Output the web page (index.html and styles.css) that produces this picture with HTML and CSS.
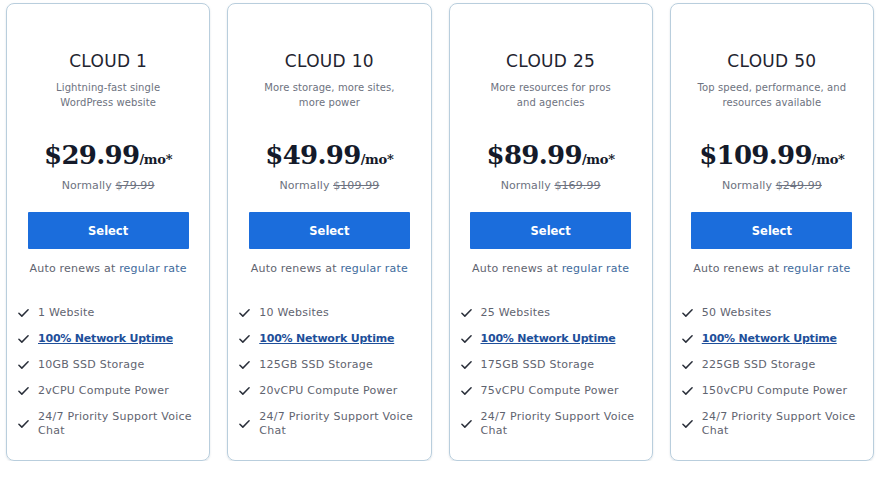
FILE: index.html
```html
<!DOCTYPE html>
<html>
<head>
<meta charset="utf-8">
<link rel="stylesheet" href="styles.css">
</head>
<body>
<div class="plans">
  <div class="card">
    <h2 class="title">CLOUD 1</h2>
    <p class="desc">Lightning-fast single<br>WordPress website</p>
    <div class="price"><span class="amt">$29.99</span><span class="per">/mo*</span></div>
    <p class="normal">Normally <s>$79.99</s></p>
    <button class="btn">Select</button>
    <p class="renew">Auto renews at <span class="link">regular rate</span></p>
    <ul class="feats">
      <li><svg class="chk" viewBox="0 0 12 10"><path d="M1 5.2 L4.2 8.4 L11 1.4"/></svg><span>1 Website</span></li>
      <li><svg class="chk" viewBox="0 0 12 10"><path d="M1 5.2 L4.2 8.4 L11 1.4"/></svg><a class="up">100% Network Uptime</a></li>
      <li><svg class="chk" viewBox="0 0 12 10"><path d="M1 5.2 L4.2 8.4 L11 1.4"/></svg><span>10GB SSD Storage</span></li>
      <li><svg class="chk" viewBox="0 0 12 10"><path d="M1 5.2 L4.2 8.4 L11 1.4"/></svg><span>2vCPU Compute Power</span></li>
      <li><svg class="chk" viewBox="0 0 12 10"><path d="M1 5.2 L4.2 8.4 L11 1.4"/></svg><span>24/7 Priority Support Voice Chat</span></li>
    </ul>
  </div>
  <div class="card">
    <h2 class="title">CLOUD 10</h2>
    <p class="desc">More storage, more sites,<br>more power</p>
    <div class="price"><span class="amt">$49.99</span><span class="per">/mo*</span></div>
    <p class="normal">Normally <s>$109.99</s></p>
    <button class="btn">Select</button>
    <p class="renew">Auto renews at <span class="link">regular rate</span></p>
    <ul class="feats">
      <li><svg class="chk" viewBox="0 0 12 10"><path d="M1 5.2 L4.2 8.4 L11 1.4"/></svg><span>10 Websites</span></li>
      <li><svg class="chk" viewBox="0 0 12 10"><path d="M1 5.2 L4.2 8.4 L11 1.4"/></svg><a class="up">100% Network Uptime</a></li>
      <li><svg class="chk" viewBox="0 0 12 10"><path d="M1 5.2 L4.2 8.4 L11 1.4"/></svg><span>125GB SSD Storage</span></li>
      <li><svg class="chk" viewBox="0 0 12 10"><path d="M1 5.2 L4.2 8.4 L11 1.4"/></svg><span>20vCPU Compute Power</span></li>
      <li><svg class="chk" viewBox="0 0 12 10"><path d="M1 5.2 L4.2 8.4 L11 1.4"/></svg><span>24/7 Priority Support Voice Chat</span></li>
    </ul>
  </div>
  <div class="card">
    <h2 class="title">CLOUD 25</h2>
    <p class="desc">More resources for pros<br>and agencies</p>
    <div class="price"><span class="amt">$89.99</span><span class="per">/mo*</span></div>
    <p class="normal">Normally <s>$169.99</s></p>
    <button class="btn">Select</button>
    <p class="renew">Auto renews at <span class="link">regular rate</span></p>
    <ul class="feats">
      <li><svg class="chk" viewBox="0 0 12 10"><path d="M1 5.2 L4.2 8.4 L11 1.4"/></svg><span>25 Websites</span></li>
      <li><svg class="chk" viewBox="0 0 12 10"><path d="M1 5.2 L4.2 8.4 L11 1.4"/></svg><a class="up">100% Network Uptime</a></li>
      <li><svg class="chk" viewBox="0 0 12 10"><path d="M1 5.2 L4.2 8.4 L11 1.4"/></svg><span>175GB SSD Storage</span></li>
      <li><svg class="chk" viewBox="0 0 12 10"><path d="M1 5.2 L4.2 8.4 L11 1.4"/></svg><span>75vCPU Compute Power</span></li>
      <li><svg class="chk" viewBox="0 0 12 10"><path d="M1 5.2 L4.2 8.4 L11 1.4"/></svg><span>24/7 Priority Support Voice Chat</span></li>
    </ul>
  </div>
  <div class="card">
    <h2 class="title">CLOUD 50</h2>
    <p class="desc">Top speed, performance, and<br>resources available</p>
    <div class="price"><span class="amt">$109.99</span><span class="per">/mo*</span></div>
    <p class="normal">Normally <s>$249.99</s></p>
    <button class="btn">Select</button>
    <p class="renew">Auto renews at <span class="link">regular rate</span></p>
    <ul class="feats">
      <li><svg class="chk" viewBox="0 0 12 10"><path d="M1 5.2 L4.2 8.4 L11 1.4"/></svg><span>50 Websites</span></li>
      <li><svg class="chk" viewBox="0 0 12 10"><path d="M1 5.2 L4.2 8.4 L11 1.4"/></svg><a class="up">100% Network Uptime</a></li>
      <li><svg class="chk" viewBox="0 0 12 10"><path d="M1 5.2 L4.2 8.4 L11 1.4"/></svg><span>225GB SSD Storage</span></li>
      <li><svg class="chk" viewBox="0 0 12 10"><path d="M1 5.2 L4.2 8.4 L11 1.4"/></svg><span>150vCPU Compute Power</span></li>
      <li><svg class="chk" viewBox="0 0 12 10"><path d="M1 5.2 L4.2 8.4 L11 1.4"/></svg><span>24/7 Priority Support Voice Chat</span></li>
    </ul>
  </div>
</div>
</body>
</html>
```
FILE: styles.css
```css
* { box-sizing: border-box; }
html, body { margin: 0; padding: 0; background: #fff; }
body {
  font-family: "DejaVu Sans", "Liberation Sans", sans-serif;
  color: #1f2430;
}
.plans {
  display: grid;
  grid-template-columns: repeat(4, 1fr);
  gap: 17px;
  padding: 3px 6px 0 6px;
}
.card {
  height: 458px;
  border: 1px solid #b9cedd;
  border-radius: 8px;
  box-shadow: 0 1px 2px rgba(120,140,160,0.25);
  display: flex;
  flex-direction: column;
  align-items: center;
  padding-top: 47px;
}
.title {
  margin: 0;
  font-size: 17px;
  font-weight: 500;
  line-height: 20px;
  letter-spacing: 0.3px;
  color: #1f2430;
}
.desc {
  margin: 9px 0 0 0;
  font-size: 10px;
  line-height: 15px;
  letter-spacing: 0.1px;
  color: #6d7280;
  text-align: center;
}
.price {
  margin-top: 29px;
  display: flex;
  align-items: baseline;
  font-family: "DejaVu Serif", "Liberation Serif", serif;
  font-weight: bold;
  color: #141a2a;
}
.amt { font-size: 26px; line-height: 32px; letter-spacing: -0.7px; }
.per { font-size: 13px; letter-spacing: -0.3px; }
.normal {
  margin: 8px 0 0 0;
  font-size: 11px;
  line-height: 14px;
  letter-spacing: 0.1px;
  color: #6d7280;
}
.normal s { color: #6d7280; }
.btn {
  margin-top: 19px;
  width: 161px;
  height: 37px;
  border: none;
  border-radius: 1px;
  background: #1b6ddc;
  color: #fff;
  font-family: "DejaVu Sans", "Liberation Sans", sans-serif;
  font-weight: bold;
  font-size: 11.5px;
}
.renew {
  margin: 13px 0 0 0;
  font-size: 11px;
  line-height: 14px;
  letter-spacing: 0.2px;
  color: #5f6470;
}
.link { color: #3e6a9c; }
.feats {
  list-style: none;
  margin: 30px 0 0 0;
  padding: 0 6px 0 11px;
  align-self: stretch;
  display: flex;
  flex-direction: column;
  gap: 12px;
}
.feats li {
  display: flex;
  align-items: center;
  gap: 9px;
  font-size: 11px;
  line-height: 14px;
  letter-spacing: 0.25px;
  color: #5f6470;
}
.chk {
  width: 11px;
  height: 10px;
  flex: none;
  fill: none;
  stroke: #2a2f3a;
  stroke-width: 1.6;
  stroke-linecap: round;
  stroke-linejoin: round;
}
.up {
  color: #1e4f9a;
  font-weight: bold;
  letter-spacing: -0.2px;
  text-decoration: underline;
}
```
